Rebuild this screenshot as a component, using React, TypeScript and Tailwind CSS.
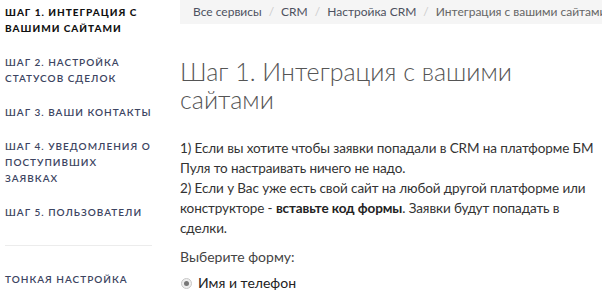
import React from 'react'

const steps = [
  { label: 'Шаг 1. Интеграция с вашими сайтами', active: true },
  { label: 'Шаг 2. Настройка статусов сделок' },
  { label: 'Шаг 3. Ваши контакты' },
  { label: 'Шаг 4. Уведомления о поступивших заявках' },
  { label: 'Шаг 5. Пользователи' },
]

const crumbs = ['Все сервисы', 'CRM', 'Настройка CRM', 'Интеграция с вашими сайтами']

export default function App() {
  return (
    <div className="flex w-[602px] h-[303px] overflow-hidden bg-white font-['Lato','Open_Sans',sans-serif]">
      <aside className="w-[147px] ml-[5px] pt-[4px] shrink-0">
        <ul className="flex flex-col gap-[18px]">
          {steps.map((s) => (
            <li
              key={s.label}
              className={
                s.active
                  ? 'text-[10px] leading-[16px] uppercase tracking-[1px] font-black text-[#111]'
                  : 'text-[10px] leading-[16px] uppercase tracking-[1px] font-semibold text-[#3c4461]'
              }
            >
              {s.label}
            </li>
          ))}
        </ul>
        <div className="mt-[25px] border-t border-[#ececec]" />
        <div className="mt-[25px] text-[10px] leading-[16px] uppercase tracking-[1px] font-semibold text-[#3c4461]">
          Тонкая настройка
        </div>
      </aside>

      <main className="ml-[28px] flex-1 min-w-0">
        <nav className="h-[24px] bg-[#f5f5f5] pl-[13px] flex items-center whitespace-nowrap text-[12px] text-[#555]">
          {crumbs.map((c, i) => (
            <React.Fragment key={c}>
              {i > 0 && <span className="mx-[7px] text-[#ccc]">/</span>}
              <span className={i === crumbs.length - 1 ? 'text-[#666]' : 'text-[#4d5160]'}>{c}</span>
            </React.Fragment>
          ))}
        </nav>

        <h1 className="mt-[33px] text-[25px] leading-[28px] font-light text-[#555] pr-[60px]">
          Шаг 1. Интеграция с вашими сайтами
        </h1>

        <p className="mt-[25px] text-[13.5px] leading-[20px] tracking-[-0.1px] text-[#333] pr-[6px]">
          1) Если вы хотите чтобы заявки попадали в CRM на платформе БМ Пуля то настраивать ничего не надо.
          <br />
          2) Если у Вас уже есть свой сайт на любой другой платформе или конструкторе -{' '}
          <b className="font-bold text-[#222]">вставьте код формы</b>. Заявки будут попадать в сделки.
        </p>

        <p className="mt-[9px] text-[14px] leading-[20px] text-[#444]">Выберите форму:</p>

        <label className="mt-[6px] flex items-center gap-[6px] text-[14px] leading-[20px] text-[#222]">
          <span className="ml-[1px] w-[11px] h-[11px] rounded-full border border-[#c8c8c8] bg-[#eee] flex items-center justify-center">
            <span className="w-[5px] h-[5px] rounded-full bg-[#777]" />
          </span>
          Имя и телефон
        </label>
      </main>
    </div>
  )
}
